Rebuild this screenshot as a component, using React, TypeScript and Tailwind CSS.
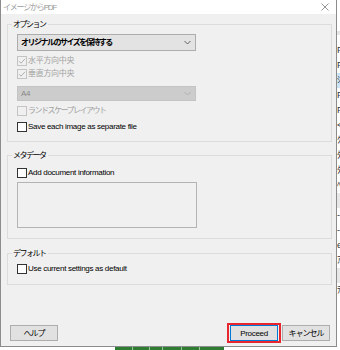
import React from 'react';

const FONT = "font-['Liberation_Sans','Noto_Sans_CJK_JP',sans-serif]";
const KANA = 'tracking-[-1.5px]';

function Box({ checked, disabled }: { checked?: boolean; disabled?: boolean }) {
  return (
    <span
      className={`flex h-[10px] w-[10px] shrink-0 items-center justify-center border ${
        disabled ? 'border-[#c4c4c4] bg-[#f0f0f0]' : 'border-[#333333] bg-white'
      }`}
    >
      {checked && (
        <svg width="8" height="8" viewBox="0 0 8 8">
          <polyline
            points="1,4.2 3,6.2 7,1.8"
            fill="none"
            stroke={disabled ? '#b0b0b0' : '#222'}
            strokeWidth="1"
          />
        </svg>
      )}
    </span>
  );
}

function Check({
  label,
  checked,
  disabled,
  kana,
  className = '',
}: {
  label: string;
  checked?: boolean;
  disabled?: boolean;
  kana?: boolean;
  className?: string;
}) {
  return (
    <div className={`flex h-[13px] items-center gap-[1px] ${className}`}>
      <Box checked={checked} disabled={disabled} />
      <span className={`${disabled ? 'text-[#a3a3a3]' : 'text-black'} ${kana ? KANA : ''}`}>{label}</span>
    </div>
  );
}

function Chevron({ color }: { color: string }) {
  return (
    <svg width="7" height="5" viewBox="0 0 7 5">
      <polyline points="0.5,1 3.5,4 6.5,1" fill="none" stroke={color} strokeWidth="1" />
    </svg>
  );
}

function Group({
  title,
  className = '',
  children,
}: {
  title: string;
  className?: string;
  children: React.ReactNode;
}) {
  return (
    <div className={`border border-[#dcdcdc] pl-[9px] ${className}`}>
      <div
        className={`-ml-[5px] -mt-[6px] h-[11px] w-fit bg-[#f0f0f0] pl-[1px] pr-[2px] leading-[11px] text-black ${KANA}`}
      >
        {title}
      </div>
      {children}
    </div>
  );
}

function Button({
  children,
  primary,
  kana,
}: {
  children: React.ReactNode;
  primary?: boolean;
  kana?: boolean;
}) {
  return (
    <div
      className={`flex h-[16px] w-[48px] items-center justify-center border bg-[#e1e1e1] text-black ${
        primary ? 'border-[#0078d7]' : 'border-[#adadad]'
      } ${kana ? 'tracking-[-1px]' : ''}`}
    >
      {children}
    </div>
  );
}

// list of the window behind the dialog, only its left edge shows
const behind = ['F', 'F', 'ｼ', 'F', 'F', '<', 'ｸ', 'ﾀ', 'ﾀ', 'ﾍ', '', '-', '-', 'e', 'ｱ', '', 'ﾃ'];

export default function App() {
  return (
    <div
      className={`flex h-[350px] w-[340px] flex-col overflow-hidden bg-white text-[8px] leading-[11px] tracking-[-0.3px] ${FONT}`}
    >
      <div className="flex h-[347px]">
        <div className="flex h-[347px] w-[337px] shrink-0 flex-col border-b border-l border-r border-[#8c8c8c]">
          <div className="flex h-[14px] items-center justify-between bg-white pl-[2px] pr-[7px]">
            <span className="tracking-[-1.2px] text-[#9a9a9a]">イメージからPDF</span>
            <svg width="8" height="8" viewBox="0 0 8 8">
              <path d="M0.5 0.5 L7.5 7.5 M7.5 0.5 L0.5 7.5" stroke="#8a8a8a" strokeWidth="0.9" />
            </svg>
          </div>

          <div className="flex flex-1 flex-col bg-[#f0f0f0] pl-[6px] pr-[4px] pt-[10px]">
            <Group title="オプション" className="pb-[8px]">
              <div className="mt-[4px] flex h-[17px] w-[179px] items-center justify-between border border-[#adadad] bg-[#e3e3e3] pl-[3px] pr-[4px]">
                <span className={`font-bold text-black ${KANA}`}>オリジナルのサイズを保持する</span>
                <Chevron color="#606060" />
              </div>
              <Check label="水平方向中央" checked disabled className="mt-[3px]" />
              <Check label="垂直方向中央" checked disabled />
              <div className="mt-[6px] flex h-[15px] w-[179px] items-center justify-between border border-[#c4c4c4] bg-[#cccccc] pl-[3px] pr-[4px]">
                <span className="text-[#8a8a8a]">A4</span>
                <Chevron color="#b0b0b0" />
              </div>
              <Check label="ランドスケープレイアウト" disabled kana className="mt-[3px]" />
              <Check label="Save each image as separate file" className="mt-[3px]" />
            </Group>

            <Group title="メタデータ" className="mt-[13px] pb-[10px]">
              <Check label="Add document information" className="mt-[5px]" />
              <div className="mt-[3px] h-[46px] w-[180px] border border-[#b4b4b4] bg-[#f0f0f0]" />
            </Group>

            <Group title="デフォルト" className="mt-[14px] pb-[9px]">
              <Check label="Use current settings as default" className="mt-[3px]" />
            </Group>

            <div className="mt-[38px] flex h-[20px] items-center pl-[3px] pr-[2px]">
              <Button kana>ヘルプ</Button>
              <div className="ml-auto flex h-[20px] items-center border-2 border-[#e8262e] px-[1px]">
                <Button primary>Proceed</Button>
              </div>
              <div className="ml-[1px]">
                <Button kana>キャンセル</Button>
              </div>
            </div>
          </div>
        </div>

        <div className="w-[3px] overflow-hidden bg-white">
          <div className="mt-[31px] h-[4px] bg-[#e6e6e6]" />
          <div className="mt-[8px] text-[9px] leading-[15px] tracking-normal text-[#333]">
            {behind.map((c, i) => (
              <div
                key={i}
                className={`h-[15px] ${i === 2 ? 'bg-[#cce4f7]' : ''} ${i === 10 || i === 15 ? 'bg-[#e8e8e8]' : ''}`}
              >
                {c}
              </div>
            ))}
          </div>
        </div>
      </div>

      <div className="flex h-[3px]">
        <div className="ml-[115px] flex w-[109px] gap-[1px] bg-[#9bc59b]">
          <div className="w-[17px] bg-[#2f7d32]" />
          <div className="w-[16px] bg-[#2f7d32]" />
          <div className="w-[12px] bg-[#2f7d32]" />
          <div className="w-[18px] bg-[#2f7d32]" />
          <div className="w-[17px] bg-[#2f7d32]" />
          <div className="flex-1 bg-[#2f7d32]" />
        </div>
      </div>
    </div>
  );
}
